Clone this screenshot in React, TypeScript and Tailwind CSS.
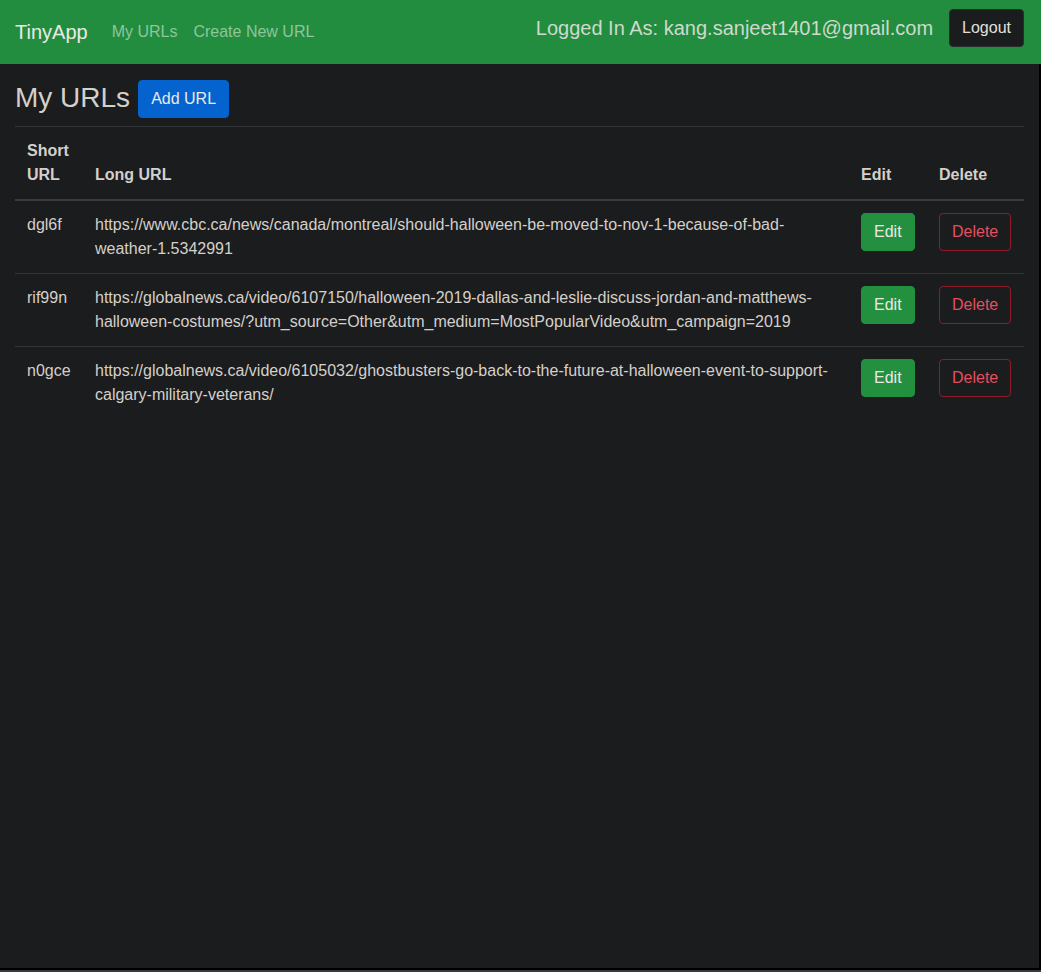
import React from 'react';

type Url = { short: string; long: string };

const urls: Url[] = [
    {
        short: 'dgl6f',
        long: 'https://www.cbc.ca/news/canada/montreal/should-halloween-be-moved-to-nov-1-because-of-bad-weather-1.5342991',
    },
    {
        short: 'rif99n',
        long: 'https://globalnews.ca/video/6107150/halloween-2019-dallas-and-leslie-discuss-jordan-and-matthews-halloween-costumes/?utm_source=Other&utm_medium=MostPopularVideo&utm_campaign=2019',
    },
    {
        short: 'n0gce',
        long: 'https://globalnews.ca/video/6105032/ghostbusters-go-back-to-the-future-at-halloween-event-to-support-calgary-military-veterans/',
    },
];

const Navbar = () => (
    <nav className="flex h-16 items-start justify-between bg-[#228d3f] pl-[15px] pr-[17px]">
        <div className="flex items-center pt-[17px]">
            <a className="mr-6 text-[20px] leading-[30px] text-[#ebe9e6]">TinyApp</a>
            <a className="mr-4 text-base leading-6 text-[#8fc59b]">My URLs</a>
            <a className="text-base leading-6 text-[#8fc59b]">Create New URL</a>
        </div>
        <div className="flex items-start gap-4 pt-[9px]">
            <span className="mt-1 text-[20px] leading-[30px] text-[#cfd9cd]">
                Logged In As: kang.sanjeet1401@gmail.com
            </span>
            <button className="rounded border border-[#2a2d30] bg-[#1b1c1e] px-3 py-1.5 text-base leading-6 text-[#e3e0db]">
                Logout
            </button>
        </div>
    </nav>
);

const UrlRow = ({ url }: { url: Url }) => (
    <tr className="border-t border-[#33373a] align-top">
        <td className="p-3">{url.short}</td>
        <td className="p-3">{url.long}</td>
        <td className="p-3">
            <button className="rounded border border-[#23903f] bg-[#23903f] px-3 py-1.5 leading-6 text-[#ebe9e6]">
                Edit
            </button>
        </td>
        <td className="p-3">
            <button className="rounded border border-[#8e1c28] bg-transparent px-3 py-1.5 leading-6 text-[#e2505e]">
                Delete
            </button>
        </td>
    </tr>
);

export default function App() {
    return (
        <div
            className="flex min-h-[972px] flex-col bg-[#1b1c1e] text-base leading-6 text-[#d4d0ca]"
            style={{ fontFamily: '"Liberation Sans", Arial, sans-serif' }}
        >
            <Navbar />
            <main className="flex-1 border-r-2 border-b-2 border-black pl-[15px] pr-[15px] pt-4">
                <div className="flex items-start gap-2">
                    <h3 className="mt-[1px] text-[28px] leading-[33.6px] text-[#d4d0ca]">My URLs</h3>
                    <button className="rounded border border-[#0463cf] bg-[#0463cf] px-3 py-1.5 leading-6 text-[#ebe9e6]">
                        Add URL
                    </button>
                </div>
                <table className="mt-2 w-full table-fixed border-collapse border-t border-[#33373a] text-left">
                    <colgroup>
                        <col className="w-[68px]" />
                        <col />
                        <col className="w-[78px]" />
                        <col className="w-[97px]" />
                    </colgroup>
                    <thead>
                        <tr className="border-b-2 border-[#363b3e] align-bottom">
                            <th className="p-3 font-bold">Short URL</th>
                            <th className="p-3 font-bold">Long URL</th>
                            <th className="p-3 font-bold">Edit</th>
                            <th className="p-3 font-bold">Delete</th>
                        </tr>
                    </thead>
                    <tbody>
                        {urls.map((u) => (
                            <UrlRow key={u.short} url={u} />
                        ))}
                    </tbody>
                </table>
            </main>
            <div className="h-[2px] bg-[#3b3b3b]" />
        </div>
    );
}
